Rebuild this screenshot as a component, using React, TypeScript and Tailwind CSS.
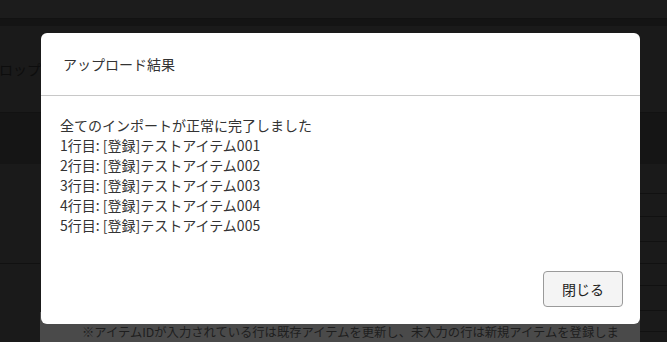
import React from 'react';

const jp = { fontFamily: '"Noto Sans CJK JP", "Noto Sans", sans-serif' };

export default function App() {
  const results = [
    '全てのインポートが正常に完了しました',
    '1行目: [登録]テストアイテム001',
    '2行目: [登録]テストアイテム002',
    '3行目: [登録]テストアイテム003',
    '4行目: [登録]テストアイテム004',
    '5行目: [登録]テストアイテム005',
  ];

  // right-side table rows peeking out from behind the dialog
  const rowHeights = ['h-[30px]', 'h-[23px]', 'h-[25px]', 'h-[22px]', 'h-[22px]', 'h-[25px]', 'h-[21px]'];

  return (
    <div className="relative h-[342px] w-[667px] overflow-hidden bg-[#1a1a1a]" style={jp}>
      {/* dimmed page behind */}
      <div className="flex h-full flex-col">
        <div className="h-[19px] border-b border-[#121212] bg-[#1c1c1c]" />
        <div className="h-[7px] bg-[#141414]" />
        <div className="flex h-[86px] items-center">
          <span className="-ml-[1px] text-[14px] text-[#0d0d0d]">ロップ</span>
        </div>
        <div className="h-[52px] border-t border-[#121212] bg-[#151515]" />

        <div className="flex flex-1">
          {/* left gutter */}
          <div className="flex w-[40px] flex-col">
            <div className="h-[100px] border-b border-[#111]" />
          </div>

          {/* main column */}
          <div className="flex w-[600px] flex-col">
            <div className="mt-auto h-[30px] bg-[#4a4a4a] pl-[42px] pt-[12px]">
              <p className="w-[546px] text-[12.3px] leading-[16px] text-[#1e1e1e]">
                ※アイテムIDが入力されている行は既存アイテムを更新し、未入力の行は新規アイテムを登録します
              </p>
            </div>
          </div>

          {/* right table */}
          <div className="flex flex-1 flex-col">
            {rowHeights.map((h, i) => (
              <div key={i} className={`${h} border-b border-[#111]`} />
            ))}
          </div>
        </div>
      </div>

      {/* dialog */}
      <div className="absolute left-[41px] top-[33px] flex h-[291px] w-[599px] flex-col rounded-[6px] bg-white">
        <div className="flex h-[63px] items-center border-b border-[#c8c8c8] px-[22px]">
          <h2 className="text-[14px] leading-[20px] text-[#333]">アップロード結果</h2>
        </div>
        <div className="flex-1 px-[19px] pt-[19px]">
          {results.map((line, i) => (
            <p key={i} className="text-[14px] leading-[20px] text-[#333]">
              {line}
            </p>
          ))}
        </div>
        <div className="flex justify-end px-[17px] pb-[17px]">
          <button className="h-[36px] w-[80px] rounded-[4px] border border-[#9a9a9a] bg-[#f4f4f4] text-[14px] text-[#222]">
            閉じる
          </button>
        </div>
      </div>
    </div>
  );
}
